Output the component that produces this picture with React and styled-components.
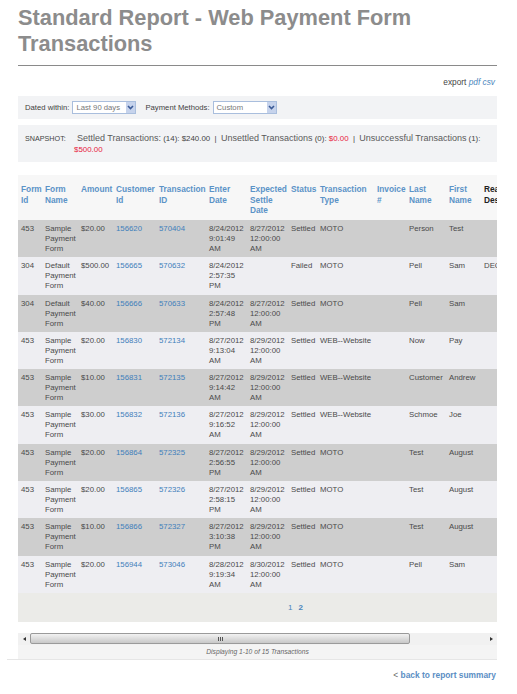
import styled, { createGlobalStyle } from "styled-components";

const columns = [
  { label: "Form Id", width: 24 },
  { label: "Form Name", width: 36 },
  { label: "Amount", width: 35 },
  { label: "Customer Id", width: 43 },
  { label: "Transaction ID", width: 50 },
  { label: "Enter Date", width: 41 },
  { label: "Expected Settle Date", width: 41 },
  { label: "Status", width: 29 },
  { label: "Transaction Type", width: 57 },
  { label: "Invoice #", width: 32 },
  { label: "Last Name", width: 40 },
  { label: "First Name", width: 35 },
  { label: "Reason Description", width: 60, dark: true },
];

const rows = [
  ["453", "Sample Payment Form", "$20.00", "156620", "570404", "8/24/2012 9:01:49 AM", "8/27/2012 12:00:00 AM", "Settled", "MOTO", "Person", "Test", ""],
  ["304", "Default Payment Form", "$500.00", "156665", "570632", "8/24/2012 2:57:35 PM", "", "Failed", "MOTO", "Pell", "Sam", "DECLINED"],
  ["304", "Default Payment Form", "$40.00", "156666", "570633", "8/24/2012 2:57:48 PM", "8/27/2012 12:00:00 AM", "Settled", "MOTO", "Pell", "Sam", ""],
  ["453", "Sample Payment Form", "$20.00", "156830", "572134", "8/27/2012 9:13:04 AM", "8/29/2012 12:00:00 AM", "Settled", "WEB--Website", "Now", "Pay", ""],
  ["453", "Sample Payment Form", "$10.00", "156831", "572135", "8/27/2012 9:14:42 AM", "8/29/2012 12:00:00 AM", "Settled", "WEB--Website", "Customer", "Andrew", ""],
  ["453", "Sample Payment Form", "$30.00", "156832", "572136", "8/27/2012 9:16:52 AM", "8/29/2012 12:00:00 AM", "Settled", "WEB--Website", "Schmoe", "Joe", ""],
  ["453", "Sample Payment Form", "$20.00", "156864", "572325", "8/27/2012 2:56:55 PM", "8/29/2012 12:00:00 AM", "Settled", "MOTO", "Test", "August", ""],
  ["453", "Sample Payment Form", "$20.00", "156865", "572326", "8/27/2012 2:58:15 PM", "8/29/2012 12:00:00 AM", "Settled", "MOTO", "Test", "August", ""],
  ["453", "Sample Payment Form", "$10.00", "156866", "572327", "8/27/2012 3:10:38 PM", "8/29/2012 12:00:00 AM", "Settled", "MOTO", "Test", "August", ""],
  ["453", "Sample Payment Form", "$20.00", "156944", "573046", "8/28/2012 9:19:34 AM", "8/30/2012 12:00:00 AM", "Settled", "MOTO", "Pell", "Sam", ""],
];

const SelectArrow = () => (
  <ArrowButton>
    <svg width="7" height="5" viewBox="0 0 7 5">
      <path d="M1 1 L3.5 3.5 L6 1" fill="none" stroke="#3a5a96" strokeWidth="1.6" />
    </svg>
  </ArrowButton>
);

const App = () => {
  return (
    <Page>
      <GlobalStyle />
      <Content>
        <Title>Standard Report - Web Payment Form Transactions</Title>
        <Export>
          export <ItalicLink>pdf</ItalicLink> <ItalicLink>csv</ItalicLink>
        </Export>
        <FilterBar>
          <FilterLabel>Dated within:</FilterLabel>
          <SelectBox>
            Last 90 days
            <SelectArrow />
          </SelectBox>
          <FilterLabel $gap={9}>Payment Methods:</FilterLabel>
          <SelectBox>
            Custom
            <SelectArrow />
          </SelectBox>
        </FilterBar>
        <Snapshot>
          <SnapshotLabel>SNAPSHOT:</SnapshotLabel>
          <SnapshotText>
            <Big>Settled Transactions:</Big> (14): $240.00 &nbsp;|&nbsp; <Big>Unsettled Transactions</Big> (0):{" "}
            <Red>$0.00</Red> &nbsp;|&nbsp; <Big>Unsuccessful Transactions</Big> (1): <Red>$500.00</Red>
          </SnapshotText>
        </Snapshot>
        <TableWrap>
          <Table>
            <colgroup>
              {columns.map((col) => (
                <col key={col.label} style={{ width: col.width }} />
              ))}
            </colgroup>
            <thead>
              <tr>
                {columns.map((col) => (
                  <HeadCell key={col.label} $dark={col.dark}>
                    {col.label}
                  </HeadCell>
                ))}
              </tr>
            </thead>
            <tbody>
              {rows.map((row, i) => (
                <Row key={row[4]} $shaded={i % 2 === 0}>
                  <Cell>{row[0]}</Cell>
                  <Cell>{row[1]}</Cell>
                  <Cell>{row[2]}</Cell>
                  <Cell>
                    <IdLink>{row[3]}</IdLink>
                  </Cell>
                  <Cell>
                    <IdLink>{row[4]}</IdLink>
                  </Cell>
                  <Cell>{row[5]}</Cell>
                  <Cell>{row[6]}</Cell>
                  <Cell>{row[7]}</Cell>
                  <Cell>{row[8]}</Cell>
                  <Cell></Cell>
                  <Cell>{row[9]}</Cell>
                  <Cell>{row[10]}</Cell>
                  <Cell>{row[11]}</Cell>
                </Row>
              ))}
            </tbody>
          </Table>
        </TableWrap>
        <Pager>
          <PageLink>1</PageLink>
          <PageLink $strong>2</PageLink>
        </Pager>
        <ScrollBar>
          <ScrollEnd>
            <Arrow $left />
          </ScrollEnd>
          <Thumb>
            <Grip />
            <Grip />
            <Grip />
          </Thumb>
          <ScrollEnd $right>
            <Arrow />
          </ScrollEnd>
        </ScrollBar>
        <Footer>Displaying 1-10 of 15 Transactions</Footer>
      </Content>
      <BackLink>&lt; <BackText>back to report summary</BackText></BackLink>
    </Page>
  );
};

export default App;

const GlobalStyle = createGlobalStyle`
  html, body {
    margin: 0;
    background: #ffffff;
  }
  body {
    font-family: "Liberation Sans", Arial, sans-serif;
    color: #444444;
  }
`;

const Page = styled.div`
  width: 517px;
  height: 694px;
  overflow: hidden;
`;

const Content = styled.div`
  margin-left: 7px;
  width: 490px;
  padding: 5px 0 0 11px;
  box-sizing: border-box;
  border-bottom: 1px solid #e6e6e6;
`;

const Title = styled.h1`
  margin: 0;
  padding-bottom: 8px;
  border-bottom: 1px solid #8a8a8a;
  font-size: 21.8px;
  line-height: 26px;
  font-weight: 700;
  color: #8c8c8c;
`;

const Export = styled.div`
  height: 30px;
  padding: 11px 2px 0 0;
  box-sizing: border-box;
  text-align: right;
  font-size: 8.3px;
  line-height: 10px;
  color: #444444;
`;

const ItalicLink = styled.a`
  font-style: italic;
  color: #4a86bd;
`;

const FilterBar = styled.div`
  display: flex;
  align-items: center;
  height: 23px;
  padding-left: 7px;
  background: #f2f3f5;
`;

const FilterLabel = styled.span`
  margin-left: ${({ $gap }) => $gap || 0}px;
  margin-right: 3px;
  font-size: 7.7px;
  color: #3f3f3f;
`;

const SelectBox = styled.div`
  display: flex;
  align-items: center;
  justify-content: space-between;
  width: 59px;
  height: 11px;
  padding-left: 3px;
  border: 1px solid #a9bedd;
  background: #ffffff;
  font-size: 7.7px;
  color: #777777;
`;

const ArrowButton = styled.span`
  display: flex;
  align-items: center;
  justify-content: center;
  width: 9px;
  height: 11px;
  background: #c6d3ec;
`;

const Snapshot = styled.div`
  display: flex;
  margin-top: 6px;
  height: 37px;
  padding: 8px 8px 0 7px;
  box-sizing: border-box;
  background: #f2f3f5;
`;

const SnapshotLabel = styled.span`
  width: 49px;
  flex: none;
  font-size: 7.2px;
  line-height: 11px;
  color: #444444;
`;

const SnapshotText = styled.div`
  text-indent: 3px;
  font-size: 7.9px;
  line-height: 11px;
  color: #444444;
`;

const Big = styled.span`
  font-size: 9px;
  color: #5a5a5a;
`;

const Red = styled.span`
  color: #e8203c;
`;

const TableWrap = styled.div`
  margin-top: 13px;
  overflow: hidden;
`;

const Table = styled.table`
  width: 523px;
  table-layout: fixed;
  border-collapse: collapse;
`;

const HeadCell = styled.th`
  height: 45px;
  padding: 9px 0 0 3px;
  box-sizing: border-box;
  vertical-align: top;
  overflow: hidden;
  text-align: left;
  white-space: normal;
  background: #f7f7f7;
  font-size: 8.3px;
  line-height: 10.5px;
  font-weight: 700;
  color: ${({ $dark }) => ($dark ? "#222222" : "#5b93c7")};
`;

const Row = styled.tr`
  background: ${({ $shaded }) => ($shaded ? "#cecece" : "#eeeef2")};
`;

const Cell = styled.td`
  height: 37.3px;
  padding: 4px 0 0 3px;
  box-sizing: border-box;
  vertical-align: top;
  overflow: hidden;
  font-size: 7.8px;
  line-height: 10px;
  color: #4a4a4a;
`;

const IdLink = styled.a`
  color: #3f80bb;
`;

const Pager = styled.div`
  display: flex;
  justify-content: center;
  gap: 6px;
  height: 29px;
  padding: 10px 0 0 76px;
  box-sizing: border-box;
  background: #ebebe8;
  font-size: 8px;
  line-height: 10px;
`;

const PageLink = styled.a`
  font-weight: ${({ $strong }) => ($strong ? 700 : 400)};
  color: #4a86bd;
`;

const ScrollBar = styled.div`
  display: flex;
  align-items: center;
  margin-top: 11px;
  height: 12px;
  background: #f1f1f1;
`;

const ScrollEnd = styled.div`
  display: flex;
  align-items: center;
  justify-content: center;
  width: 12px;
  flex: none;
  margin-left: ${({ $right }) => ($right ? "auto" : "0")};
`;

const Arrow = styled.span`
  width: 0;
  height: 0;
  border-top: 2.5px solid transparent;
  border-bottom: 2.5px solid transparent;
  border-left: ${({ $left }) => ($left ? "0" : "3px solid #333333")};
  border-right: ${({ $left }) => ($left ? "3px solid #333333" : "0")};
`;

const Thumb = styled.div`
  display: flex;
  align-items: center;
  justify-content: center;
  gap: 1px;
  width: 380px;
  height: 11px;
  box-sizing: border-box;
  border: 1px solid #9a9a9a;
  border-radius: 2px;
  background: linear-gradient(#f2f2f2, #c8c8c8);
`;

const Grip = styled.span`
  width: 1px;
  height: 4px;
  background: #555555;
`;

const Footer = styled.div`
  height: 14px;
  background: #f4f4f4;
  text-align: center;
  font-size: 6.7px;
  line-height: 14px;
  font-style: italic;
  color: #666666;
`;

const BackLink = styled.div`
  width: 496px;
  margin-top: 9px;
  text-align: right;
  font-size: 8.4px;
  line-height: 12px;
  color: #666666;
`;

const BackText = styled.a`
  font-weight: 700;
  color: #5b8ec4;
`;
